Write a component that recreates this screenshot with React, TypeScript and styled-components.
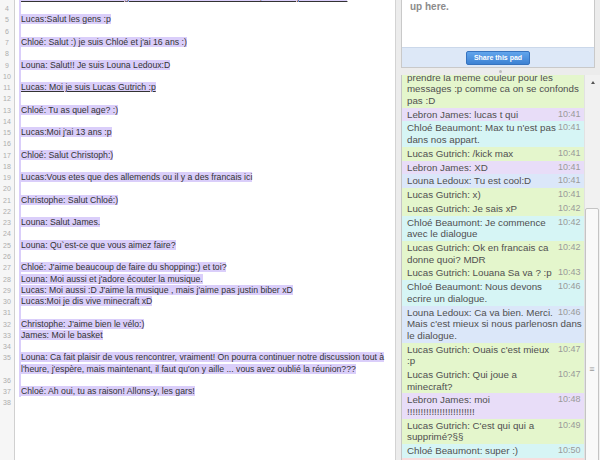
import styled, { createGlobalStyle } from 'styled-components';

const GlobalStyle = createGlobalStyle`
    html, body {
        margin: 0;
        padding: 0;
    }
    body {
        width: 600px;
        height: 460px;
        overflow: hidden;
        font-family: "Liberation Sans", Arial, sans-serif;
    }
`;

const ROW = 11.27;

const Page = styled.div`
    display: flex;
    width: 600px;
    height: 460px;
    overflow: hidden;
    background: #ffffff;
`;

const Editor = styled.div`
    flex: 1;
    display: flex;
    overflow: hidden;
    border-right: 1px solid #d3d3d3;
`;

const Gutter = styled.div`
    width: 14px;
    flex-shrink: 0;
    background: #f6f6f6;
    border-right: 1px solid #d0d0d0;
`;

const Numbers = styled.div`
    margin-top: -8.1px;
`;

const LineNumber = styled.div<{ $rows: number }>`
    height: ${p => p.$rows * ROW}px;
    line-height: ${ROW}px;
    font-size: 7px;
    color: #adadad;
    text-align: center;
`;

const Lines = styled.div`
    flex: 1;
    margin-top: -8.1px;
    padding: 0 5px 0 4px;
`;

const Line = styled.div<{ $stripe: boolean }>`
    min-height: ${ROW}px;
    line-height: ${ROW}px;
    font-size: 8.7px;
    color: #333333;
    border-left: 2px solid ${p => (p.$stripe ? '#dacefa' : 'transparent')};
`;

const Authored = styled.span<{ $underline?: boolean }>`
    background: #dacefa;
    text-decoration: ${p => (p.$underline ? 'underline' : 'none')};
`;

const Side = styled.div`
    width: 199px;
    flex-shrink: 0;
    display: flex;
    flex-direction: column;
    padding-left: 5px;
    background: #ececec;
`;

const InfoBox = styled.div`
    height: 68px;
    box-sizing: border-box;
    margin-right: 5px;
    display: flex;
    flex-direction: column;
    overflow: hidden;
    background: #ffffff;
    border: 1px solid #c9c9c9;
    border-top: none;
`;

const InfoText = styled.div`
    flex: 1;
    margin-top: -13px;
    padding: 0 8px;
    font-size: 10px;
    font-weight: bold;
    line-height: 13px;
    color: #8c8c8c;
`;

const ShareBar = styled.div`
    height: 19px;
    display: flex;
    align-items: center;
    justify-content: center;
    background: #dde8f7;
    border-top: 1px solid #cbd8ea;
`;

const ShareButton = styled.button`
    height: 14px;
    padding: 0 7px;
    font-family: "Liberation Sans", Arial, sans-serif;
    font-size: 7px;
    font-weight: bold;
    color: #ffffff;
    background: linear-gradient(#62a5ec, #3d82d3);
    border: 1px solid #3673bf;
    border-radius: 2px;
`;

const Grip = styled.div`
    height: 7px;
    display: flex;
    align-items: center;
    justify-content: center;
`;

const GripDot = styled.div`
    width: 3px;
    height: 3px;
    border-radius: 50%;
    background: #bdbdbd;
`;

const ChatBox = styled.div`
    flex: 1;
    min-height: 0;
    display: flex;
    overflow: hidden;
    border-left: 1px solid #c6c6c6;
`;

const ChatList = styled.div`
    flex: 1;
    overflow: hidden;
    background: #ffffff;
`;

const ChatRows = styled.div`
    margin-top: -16px;
`;

const tones = {
    green: '#e4f6cc',
    purple: '#e8ddf8',
    cyan: '#d6f5f5',
    blue: '#dbe7f9',
    pink: '#f7dcdc',
};

type Tone = keyof typeof tones;

const ChatRow = styled.div<{ $tone: Tone }>`
    padding: 1.1px 1.5px 1.1px 5px;
    font-size: 9.75px;
    line-height: 11.6px;
    color: #505050;
    background: ${p => tones[p.$tone]};
`;

const Time = styled.span`
    float: right;
    margin: 0 2px 0 2px;
    font-size: 9px;
    color: #9a9a9a;
`;

const Scrollbar = styled.div`
    width: 15px;
    flex-shrink: 0;
    display: flex;
    flex-direction: column;
    background: #f1f1f1;
    border-left: 1px solid #e2e2e2;
`;

const ArrowButton = styled.div`
    height: 14px;
    flex-shrink: 0;
    display: flex;
    align-items: center;
    justify-content: center;
`;

const ArrowUp = styled.div`
    width: 0;
    height: 0;
    border-left: 2.5px solid transparent;
    border-right: 2.5px solid transparent;
    border-bottom: 3px solid #555555;
`;

const Track = styled.div`
    height: 119px;
    flex-shrink: 0;
`;

const Thumb = styled.div`
    height: 320px;
    flex-shrink: 0;
    margin: 0 1px 0 0;
    display: flex;
    align-items: center;
    justify-content: center;
    background: #f9f9f9;
    border: 1px solid #c4c4c4;
    border-radius: 2px;
    font-size: 9px;
    color: #9a9a9a;
`;

interface PadLine {
    n: number;
    text?: string;
    underline?: boolean;
    rows?: number;
    stripe?: boolean;
}

const padLines: PadLine[] = [
    { n: 3, text: 'Lucas: On va faire un dialogue en francais avec tout le monde, ok? Moi je suis Lucas', underline: true },
    { n: 4 },
    { n: 5, text: 'Lucas:Salut les gens :p' },
    { n: 6 },
    { n: 7, text: "Chloé: Salut :) je suis Chloé et j'ai 16 ans :)" },
    { n: 8 },
    { n: 9, text: 'Louna: Salut!! Je suis Louna Ledoux:D' },
    { n: 10 },
    { n: 11, text: 'Lucas: Moi je suis Lucas Gutrich :p', underline: true },
    { n: 12 },
    { n: 13, text: 'Chloé: Tu as quel age? :)' },
    { n: 14 },
    { n: 15, text: "Lucas:Moi j'ai 13 ans :p" },
    { n: 16 },
    { n: 17, text: 'Chloé: Salut Christoph:)' },
    { n: 18 },
    { n: 19, text: 'Lucas:Vous etes que des allemends ou il y a des francais ici' },
    { n: 20 },
    { n: 21, text: 'Christophe: Salut Chloé:)' },
    { n: 22 },
    { n: 23, text: 'Louna: Salut James.' },
    { n: 24 },
    { n: 25, text: 'Louna: Qu`est-ce que vous aimez faire?' },
    { n: 26 },
    { n: 27, text: "Chloé: J'aime beaucoup de faire du shopping:) et toi?" },
    { n: 28, text: "Louna: Moi aussi et j'adore écouter la musique." },
    { n: 29, text: "Lucas: Moi aussi :D J'aime la musique , mais j'aime pas justin biber xD" },
    { n: 30, text: 'Lucas:Moi je dis vive minecraft xD' },
    { n: 31 },
    { n: 32, text: "Christophe: J'aime bien le vélo:)" },
    { n: 33, text: 'James: Moi le basket' },
    { n: 34 },
    {
        n: 35,
        rows: 2,
        text: "Louna: Ca fait plaisir de vous rencontrer, vraiment! On pourra continuer notre discussion tout à l'heure, j'espère, mais maintenant, il faut qu'on y aille ... vous avez oublié la réunion???",
    },
    { n: 36 },
    { n: 37, text: 'Chloé: Ah oui, tu as raison! Allons-y, les gars!' },
    { n: 38, stripe: false },
];

interface ChatMessage {
    tone: Tone;
    author: string;
    text: string;
    time: string;
    hidden?: string;
}

const messages: ChatMessage[] = [
    {
        tone: 'green',
        author: 'Lucas Gutrich',
        hidden: 'On devrait tous',
        text: 'prendre la meme couleur pour les messages :p comme ca on se confonds pas :D',
        time: '10:40',
    },
    { tone: 'purple', author: 'Lebron James', text: 'lucas t qui', time: '10:41' },
    { tone: 'cyan', author: 'Chloé Beaumont', text: "Max tu n'est pas dans nos appart.", time: '10:41' },
    { tone: 'green', author: 'Lucas Gutrich', text: '/kick max', time: '10:41' },
    { tone: 'purple', author: 'Lebron James', text: 'XD', time: '10:41' },
    { tone: 'blue', author: 'Louna Ledoux', text: 'Tu est cool:D', time: '10:41' },
    { tone: 'green', author: 'Lucas Gutrich', text: 'x)', time: '10:41' },
    { tone: 'green', author: 'Lucas Gutrich', text: 'Je sais xP', time: '10:42' },
    { tone: 'cyan', author: 'Chloé Beaumont', text: 'Je commence avec le dialogue', time: '10:42' },
    { tone: 'green', author: 'Lucas Gutrich', text: 'Ok en francais ca donne quoi? MDR', time: '10:42' },
    { tone: 'green', author: 'Lucas Gutrich', text: 'Louana Sa va ? :p', time: '10:43' },
    { tone: 'cyan', author: 'Chloé Beaumont', text: 'Nous devons ecrire un dialogue.', time: '10:46' },
    {
        tone: 'blue',
        author: 'Louna Ledoux',
        text: "Ca va bien. Merci. Mais c'est mieux si nous parlenosn dans le dialogue.",
        time: '10:46',
    },
    { tone: 'green', author: 'Lucas Gutrich', text: "Ouais c'est mieux :p", time: '10:47' },
    { tone: 'green', author: 'Lucas Gutrich', text: 'Qui joue a minecraft?', time: '10:47' },
    { tone: 'purple', author: 'Lebron James', text: 'moi !!!!!!!!!!!!!!!!!!!!!!!!!', time: '10:48' },
    { tone: 'green', author: 'Lucas Gutrich', text: "C'est qui qui a supprimé?§§", time: '10:49' },
    { tone: 'cyan', author: 'Chloé Beaumont', text: 'super :)', time: '10:50' },
    { tone: 'pink', author: 'Max', text: 'lol', time: '10:50' },
];

function App() {
    return (
        <Page>
            <GlobalStyle />
            <Editor>
                <Gutter>
                    <Numbers>
                        {padLines.map(line => (
                            <LineNumber key={line.n} $rows={line.rows ?? 1}>{line.n}</LineNumber>
                        ))}
                    </Numbers>
                </Gutter>
                <Lines>
                    {padLines.map(line => (
                        <Line key={line.n} $stripe={line.stripe ?? true}>
                            {line.text && <Authored $underline={line.underline}>{line.text}</Authored>}
                        </Line>
                    ))}
                </Lines>
            </Editor>
            <Side>
                <InfoBox>
                    <InfoText>
                        Your recently visited pads will show
                        <br />
                        up here.
                    </InfoText>
                    <ShareBar>
                        <ShareButton>Share this pad</ShareButton>
                    </ShareBar>
                </InfoBox>
                <Grip>
                    <GripDot />
                </Grip>
                <ChatBox>
                    <ChatList>
                        <ChatRows>
                            {messages.map((msg, i) => (
                                <ChatRow key={i} $tone={msg.tone}>
                                    <Time>{msg.time}</Time>
                                    {msg.hidden ? (
                                        <>
                                            {msg.author}: {msg.hidden}
                                            <br />
                                            {msg.text}
                                        </>
                                    ) : (
                                        <>{msg.author}: {msg.text}</>
                                    )}
                                </ChatRow>
                            ))}
                        </ChatRows>
                    </ChatList>
                    <Scrollbar>
                        <ArrowButton>
                            <ArrowUp />
                        </ArrowButton>
                        <Track />
                        <Thumb>≡</Thumb>
                    </Scrollbar>
                </ChatBox>
            </Side>
        </Page>
    );
}

export default App;
